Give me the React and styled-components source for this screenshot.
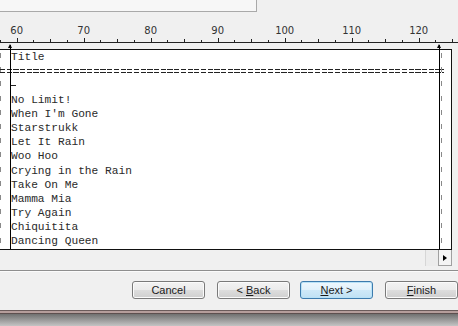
import React from "react";
import styled, { createGlobalStyle } from "styled-components";

const CHAR = 6.7;
const COL0 = 16.7; // x of column 60 on the ruler

const songs = [
  "No Limit!",
  "When I'm Gone",
  "Starstrukk",
  "Let It Rain",
  "Woo Hoo",
  "Crying in the Rain",
  "Take On Me",
  "Mamma Mia",
  "Try Again",
  "Chiquitita",
  "Dancing Queen",
];

const GlobalStyle = createGlobalStyle`
  html, body {
    margin: 0;
    padding: 0;
    background: #f0f0f0;
    overflow: hidden;
  }
`;

const Window = styled.div`
  width: 458px;
  height: 326px;
  display: flex;
  flex-direction: column;
  background: #f0f0f0;
  font-family: "Liberation Sans", Arial, sans-serif;
`;

const TopStrip = styled.div`
  height: 12px;
  display: flex;
`;

const TabBox = styled.div`
  width: 257px;
  box-sizing: border-box;
  background: #f7f7f7;
  border-right: 1px solid #a9a9a9;
  border-bottom: 1px solid #a9a9a9;
`;

const Ruler = styled.div`
  position: relative;
  height: 37px;
`;

const RulerNum = styled.span`
  position: absolute;
  top: 13px;
  transform: translateX(-50%);
  font-family: "DejaVu Sans", Verdana, sans-serif;
  font-size: 10px;
  line-height: 12px;
  color: #333;
`;

const RulerTicks = styled.svg`
  position: absolute;
  left: 0;
  top: 0;
`;

const Editor = styled.div`
  position: relative;
  height: 201px;
  width: 452px;
  box-sizing: border-box;
  background: #fff;
  border-top: 1px solid #111;
  border-right: 1px solid #111;
  border-bottom: 1px solid #111;
`;

const Lines = styled.div`
  padding-left: 11px;
  font-family: "Liberation Mono", "Courier New", monospace;
  font-size: 11.2px;
  line-height: 14.2px;
  color: #2a2a2a;
  white-space: pre;
`;

const Line = styled.div`
  height: 14.2px;
`;

const Dash = styled.div`
  height: 14.2px;
  display: flex;
  align-items: center;
  &::before {
    content: "";
    width: 5px;
    height: 1px;
    background: #222;
  }
`;

const DoubleRule = styled.div`
  height: 14.2px;
  margin-left: -11px;
  width: 444px;
  position: relative;
  &::before,
  &::after {
    content: "";
    position: absolute;
    left: 0;
    right: 0;
    height: 1px;
    background: repeating-linear-gradient(
      90deg,
      #222 0 5.2px,
      transparent 5.2px ${CHAR}px
    );
  }
  &::before {
    top: 5px;
  }
  &::after {
    top: 8px;
  }
`;

const Guide = styled.div`
  position: absolute;
  top: -5px;
  bottom: 0;
  left: ${(p) => p.$x}px;
  width: 1px;
  background: #000;
  &::before {
    content: "";
    position: absolute;
    top: -1px;
    left: -2px;
    border-left: 2.5px solid transparent;
    border-right: 2.5px solid transparent;
    border-bottom: 4px solid #000;
  }
`;

const DashedEdge = styled.div`
  position: absolute;
  top: 3px;
  bottom: 2px;
  left: ${(p) => p.$x}px;
  width: 1px;
  background: repeating-linear-gradient(
    180deg,
    #8a8a8a 0 5px,
    transparent 5px 14.2px
  );
`;

const ScrollRow = styled.div`
  height: 16px;
  width: 452px;
  display: flex;
  justify-content: flex-end;
`;

const ScrollThumb = styled.div`
  width: 13px;
  box-sizing: border-box;
  border-left: 1px solid #d6d6d6;
  background: #ececec;
`;

const ScrollButton = styled.div`
  width: 14px;
  box-sizing: border-box;
  border-left: 1px solid #a0a0a0;
  border-right: 1px solid #a0a0a0;
  border-bottom: 1px solid #a0a0a0;
  background: #f4f4f4;
  display: flex;
  align-items: center;
  justify-content: center;
  &::after {
    content: "";
    border-top: 3px solid transparent;
    border-bottom: 3px solid transparent;
    border-left: 4px solid #000;
  }
`;

const Separator = styled.div`
  margin-top: 4px;
  height: 1px;
  background: #8e8e8e;
  border-bottom: 1px solid #fbfbfb;
`;

const ButtonBar = styled.div`
  display: flex;
  padding: 9px 0 0 132px;
  height: 29px;
`;

const Button = styled.div`
  width: 73px;
  height: 18px;
  box-sizing: border-box;
  margin-right: ${(p) => p.$gap}px;
  border: 1px solid ${(p) => (p.$default ? "#3d7bad" : "#7a7a7a")};
  border-radius: 3px;
  background: ${(p) =>
    p.$default
      ? "linear-gradient(#eef7fd 0%, #e0f1fb 50%, #cfe9f8 51%, #c0e1f4 100%)"
      : "linear-gradient(#f3f3f3 0%, #ebebeb 50%, #dddddd 51%, #cfcfcf 100%)"};
  box-shadow: inset 0 0 0 1px ${(p) => (p.$default ? "#b9e2f7" : "#fbfbfb")};
  display: flex;
  align-items: center;
  justify-content: center;
  font-size: 11px;
  color: #1a1a1a;
  u {
    text-decoration: underline;
  }
`;

const FrameEdge = styled.div`
  height: 4px;
  background: linear-gradient(#6b5b5b 0 1px, #b59d9b 1px 3px, #5d4f4f 3px);
`;

const Shadow = styled.div`
  flex: 1;
  background: linear-gradient(#707070, #c4c4c4);
`;

function RulerDrawing() {
  const ticks = [];
  for (let c = 57.5; c <= 125; c += 2.5) {
    const x = Math.round(COL0 + (c - 60) * CHAR) + 0.5;
    const major = c % 10 === 0;
    const mid = c % 5 === 0;
    const h = major ? 4 : mid ? 3 : 2;
    ticks.push(<line key={c} x1={x} x2={x} y1={30 - h} y2={30} stroke="#222" />);
  }
  return (
    <RulerTicks width="458" height="37">
      <line x1="0" x2="458" y1="30.5" y2="30.5" stroke="#222" />
      {ticks}
    </RulerTicks>
  );
}

export default function App() {
  const labels = [60, 70, 80, 90, 100, 110, 120];
  return (
    <Window>
      <GlobalStyle />
      <TopStrip>
        <TabBox />
      </TopStrip>
      <Ruler>
        <RulerDrawing />
        {labels.map((n) => (
          <RulerNum key={n} style={{ left: COL0 + (n - 60) * CHAR }}>
            {n}
          </RulerNum>
        ))}
      </Ruler>
      <Editor>
        <DashedEdge $x={0} />
        <DashedEdge $x={441} />
        <Lines>
          <Line>Title</Line>
          <DoubleRule />
          <Dash />
          {songs.map((s) => (
            <Line key={s}>{s}</Line>
          ))}
        </Lines>
        <Guide $x={10} />
        <Guide $x={439} />
      </Editor>
      <ScrollRow>
        <ScrollThumb />
        <ScrollButton />
      </ScrollRow>
      <Separator />
      <ButtonBar>
        <Button $gap={12}>Cancel</Button>
        <Button $gap={10}>
          &lt;&nbsp;<u>B</u>ack
        </Button>
        <Button $gap={12} $default>
          <u>N</u>ext &gt;
        </Button>
        <Button>
          <u>F</u>inish
        </Button>
      </ButtonBar>
      <FrameEdge />
      <Shadow />
    </Window>
  );
}
